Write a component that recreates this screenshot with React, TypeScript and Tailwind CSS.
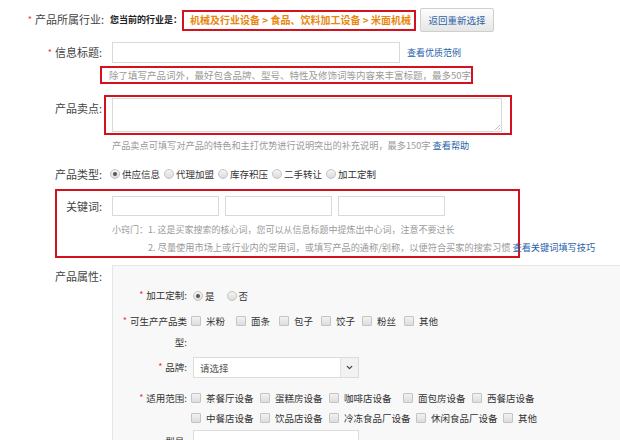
import { ChevronDown } from "lucide-react";

const Star = () => <span className="text-[#e4393c] text-[9px] mr-[3px] relative top-[-1px]">*</span>;

const Radio = ({ checked = false }: { checked?: boolean }) => (
  <span className="inline-flex w-[10px] h-[10px] rounded-full border border-[#c4c4c4] bg-gradient-to-b from-[#f4f4f4] to-[#dcdcdc] items-center justify-center mr-[2px] shrink-0">
    {checked && <span className="w-[4px] h-[4px] rounded-full bg-[#555]" />}
  </span>
);

const Check = () => (
  <span className="inline-block w-[10px] h-[10px] border border-[#c4c4c4] bg-gradient-to-b from-[#f2f2f2] to-[#dddddd] rounded-[1px] mr-[5px] shrink-0" />
);

const RadioItem = ({ label, checked }: { label: string; checked?: boolean }) => (
  <span className="inline-flex items-center">
    <Radio checked={checked} />
    <span>{label}</span>
  </span>
);

const CheckItem = ({ label, w }: { label: string; w: string }) => (
  <span className={`inline-flex items-center shrink-0 ${w}`}>
    <Check />
    <span className="whitespace-nowrap">{label}</span>
  </span>
);

const PanelLabel = ({ children, star = true }: { children: React.ReactNode; star?: boolean }) => (
  <div className="w-[75px] text-right shrink-0 pr-[1px] whitespace-nowrap">
    {star && <Star />}
    {children}
  </div>
);

export default function App() {
  return (
    <div
      className="w-[620px] h-[440px] overflow-hidden bg-white text-[#444]"
      style={{ fontFamily: '"Noto Sans CJK SC", "Noto Sans", sans-serif' }}
    >
      {/* industry */}
      <div className="flex items-center h-[24px] mt-[8px] text-[11px] leading-[14px]">
        <div className="w-[104px] text-right shrink-0 whitespace-nowrap">
          <Star />
          产品所属行业:
        </div>
        <div className="ml-[6px] font-bold text-[#222] text-[9px] w-[72px] shrink-0 whitespace-nowrap">您当前的行业是：</div>
        <div className="h-[21px] w-[234px] border-2 border-[#d3121d] flex items-center pl-[6px] font-bold text-[#e8870e] text-[10px] whitespace-nowrap">
          机械及行业设备 &gt; 食品、饮料加工设备 &gt; 米面机械
        </div>
        <button className="ml-[4px] h-[24px] w-[74px] border border-[#cfcfcf] rounded-[2px] bg-gradient-to-b from-[#fdfdfd] to-[#e6e6e6] text-[#2f62a6] text-[9.5px]">
          返回重新选择
        </button>
      </div>

      {/* title */}
      <div className="flex items-center mt-[10px] h-[21px] text-[11px]">
        <div className="w-[102px] text-right shrink-0">
          <Star />
          信息标题:
        </div>
        <div className="ml-[10px] w-[288px] h-[21px] border border-[#d9d9d9] bg-white" />
        <a className="ml-[7px] text-[9px] text-[#1f5fa8]">查看优质范例</a>
      </div>
      <div className="ml-[100px] mt-[3px] w-[373px] h-[18px] border-2 border-[#d3121d] flex items-center pl-[7px] text-[9.5px] text-[#9a9a9a] whitespace-nowrap">
        除了填写产品词外，最好包含品牌、型号、特性及修饰词等内容来丰富标题，最多50字
      </div>

      {/* selling point */}
      <div className="flex mt-[11px] text-[11px]">
        <div className="w-[102px] text-right shrink-0 pt-[6px] leading-[14px]">产品卖点:</div>
        <div className="ml-[2px] w-[408px] h-[40px] border-2 border-[#d3121d] pt-[1px] pl-[6px]">
          <div className="w-[390px] h-[34px] border border-[#d9d9d9] bg-white relative">
            <svg className="absolute right-[1px] bottom-[1px]" width="6" height="6" viewBox="0 0 6 6">
              <path d="M6 1 L1 6 M6 4 L4 6" stroke="#aaa" strokeWidth="0.8" />
            </svg>
          </div>
        </div>
      </div>
      <div className="ml-[112px] mt-[4px] text-[9.2px] leading-[12px] text-[#9a9a9a] whitespace-nowrap">
        产品卖点可填写对产品的特色和主打优势进行说明突出的补充说明，最多150字{" "}
        <a className="text-[#1f5fa8]">查看帮助</a>
      </div>

      {/* type */}
      <div className="flex items-center mt-[16px] h-[14px] text-[11px]">
        <div className="w-[102px] text-right shrink-0">产品类型:</div>
        <div className="ml-[8px] flex items-center gap-[4px] text-[9.5px] text-[#333]">
          <RadioItem label="供应信息" checked />
          <RadioItem label="代理加盟" />
          <RadioItem label="库存积压" />
          <RadioItem label="二手转让" />
          <RadioItem label="加工定制" />
        </div>
      </div>

      {/* keywords */}
      <div className="ml-[55px] mt-[8px] w-[465px] h-[69px] border-2 border-[#d3121d] pt-[5px]">
        <div className="flex items-center h-[20px] text-[11px]">
          <div className="w-[45px] text-right shrink-0">关键词:</div>
          <div className="ml-[10px] flex gap-[6px]">
            <div className="w-[107px] h-[20px] border border-[#d9d9d9] bg-white" />
            <div className="w-[107px] h-[20px] border border-[#d9d9d9] bg-white" />
            <div className="w-[107px] h-[20px] border border-[#d9d9d9] bg-white" />
          </div>
        </div>
        <div className="ml-[55px] mt-[8px] text-[9px] leading-[12px] text-[#9a9a9a] whitespace-nowrap">
          小窍门：1. 这是买家搜索的核心词，您可以从信息标题中提炼出中心词，注意不要过长
        </div>
        <div className="ml-[91px] mt-[5px] text-[9.2px] leading-[12px] text-[#9a9a9a] whitespace-nowrap">
          2. 尽量使用市场上或行业内的常用词，或填写产品的通称/别称，以便符合买家的搜索习惯{" "}
          <a className="text-[#1f5fa8]">查看关键词填写技巧</a>
        </div>
      </div>

      {/* attributes */}
      <div className="flex mt-[7px] text-[11px]">
        <div className="w-[102px] text-right shrink-0 pt-[4px] leading-[14px]">产品属性:</div>
        <div className="ml-[10px] flex-1 h-[200px] bg-[#f8f8f8] border-t border-l border-[#e6e6e6] text-[9.5px] text-[#333] leading-[12px]">
          <div className="flex items-center mt-[23px]">
            <PanelLabel>加工定制:</PanelLabel>
            <div className="ml-[5px] flex items-center gap-[12px]">
              <RadioItem label="是" checked />
              <RadioItem label="否" />
            </div>
          </div>

          <div className="flex mt-[9px]">
            <div className="w-[75px] text-right shrink-0 leading-[20px] pr-[1px]">
              <div className="whitespace-nowrap">
                <Star />
                可生产产品类
              </div>
              <div>型:</div>
            </div>
            <div className="ml-[3px] flex items-center h-[20px] text-[#333]">
              <CheckItem label="米粉" w="w-[45px]" />
              <CheckItem label="面条" w="w-[43px]" />
              <CheckItem label="包子" w="w-[42px]" />
              <CheckItem label="饺子" w="w-[41px]" />
              <CheckItem label="粉丝" w="w-[42px]" />
              <CheckItem label="其他" w="w-[40px]" />
            </div>
          </div>

          <div className="flex items-center mt-[5px]">
            <PanelLabel>品牌:</PanelLabel>
            <div className="ml-[5px] w-[166px] h-[21px] border border-[#dcdcdc] bg-white flex items-center">
              <span className="flex-1 pl-[6px] text-[#555]">请选择</span>
              <span className="w-[18px] h-full bg-[#f2f2f2] border-l border-[#e2e2e2] flex items-center justify-center">
                <ChevronDown size={9} strokeWidth={3.5} color="#444" />
              </span>
            </div>
          </div>

          <div className="flex mt-[10px]">
            <div className="w-[75px] text-right shrink-0 leading-[20px] pr-[1px] whitespace-nowrap">
              <Star />
              适用范围:
            </div>
            <div className="ml-[3px] flex flex-col">
              <div className="flex items-center h-[20px]">
                <CheckItem label="茶餐厅设备" w="w-[69px]" />
                <CheckItem label="蛋糕房设备" w="w-[69px]" />
                <CheckItem label="咖啡店设备" w="w-[74px]" />
                <CheckItem label="面包房设备" w="w-[69px]" />
                <CheckItem label="西餐店设备" w="w-[69px]" />
              </div>
              <div className="flex items-center h-[20px]">
                <CheckItem label="中餐店设备" w="w-[69px]" />
                <CheckItem label="饮品店设备" w="w-[69px]" />
                <CheckItem label="冷冻食品厂设备" w="w-[87px]" />
                <CheckItem label="休闲食品厂设备" w="w-[87px]" />
                <CheckItem label="其他" w="w-[40px]" />
              </div>
            </div>
          </div>

          <div className="flex items-center mt-[2px]">
            <PanelLabel star={false}>型号:</PanelLabel>
            <div className="ml-[5px] w-[166px] h-[21px] border border-[#dcdcdc] bg-white" />
          </div>
        </div>
      </div>
    </div>
  );
}
